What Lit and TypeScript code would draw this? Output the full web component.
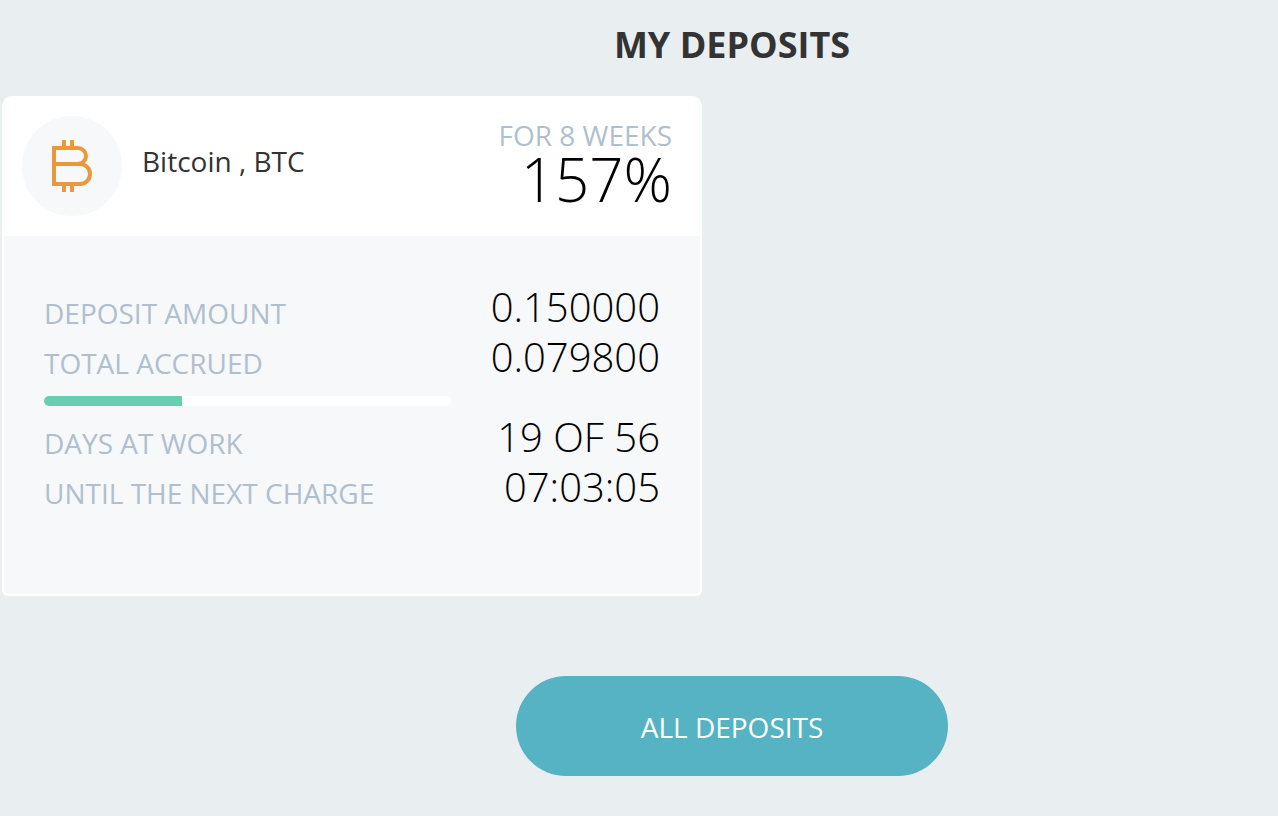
import { LitElement, html, css, svg } from "lit";
import { customElement, property } from "lit/decorators.js";

interface Deposit {
  currency: string;
  code: string;
  term: string;
  rate: string;
  amount: string;
  accrued: string;
  progress: number;
  days: string;
  countdown: string;
}

const bitcoinIcon = svg`
  <g fill="none" stroke="#eb983c" stroke-width="4">
    <path d="M2 8H26A8 8 0 0 1 26 24H2M26 24H28A10 10 0 0 1 28 44H2V6"/>
    <path d="M12 0V8M20 0V8M12 44V52M20 44V52"/>
  </g>`;

@customElement("deposit-card")
export class DepositCard extends LitElement {
  @property({ attribute: false }) deposit!: Deposit;

  static styles = css`
    :host {
      display: block;
    }
    .card {
      background: #fff;
      border: 2px solid #fff;
      border-radius: 10px 10px 6px 6px;
    }
    .head {
      display: flex;
      align-items: flex-start;
      gap: 20px;
      padding: 18px 28px 20px 18px;
    }
    .coin {
      display: flex;
      align-items: center;
      justify-content: center;
      flex: none;
      width: 100px;
      height: 100px;
      border-radius: 50%;
      background: #f6f8fa;
    }
    .name {
      flex: 1;
      margin: 0;
      font-size: 28px;
      font-weight: 400;
      line-height: 90px;
      color: #333;
    }
    .offer {
      text-align: right;
    }
    .term {
      font-size: 28px;
      line-height: 38px;
      color: #b0bfce;
    }
    .rate {
      font-size: 60px;
      font-weight: 300;
      line-height: 50px;
      color: #000;
    }
    .body {
      padding: 52px 40px 76px;
      background: #f6f8fa;
      border-radius: 0 0 4px 4px;
    }
    .list {
      margin: 0;
    }
    .row {
      display: flex;
      justify-content: space-between;
      align-items: flex-start;
    }
    .label {
      font-size: 28px;
      line-height: 50px;
      color: #b0bfce;
    }
    .value {
      margin: 0;
      font-size: 40px;
      font-weight: 300;
      line-height: 38px;
      color: #000;
    }
    .track {
      width: 66%;
      height: 10px;
      margin: 8px 0 12px;
      overflow: hidden;
      border-radius: 5px;
      background: #fff;
    }
    .fill {
      height: 100%;
      background: #67cfb1;
    }
  `;

  render() {
    const d = this.deposit;
    return html`
      <article class="card">
        <header class="head">
          <div class="coin">
            <svg width="40" height="52" viewBox="0 0 40 52" aria-hidden="true">${bitcoinIcon}</svg>
          </div>
          <h2 class="name">${d.currency} , ${d.code}</h2>
          <div class="offer">
            <div class="term">${d.term}</div>
            <div class="rate">${d.rate}</div>
          </div>
        </header>
        <div class="body">
          <dl class="list">
            <div class="row"><dt class="label">DEPOSIT AMOUNT</dt><dd class="value">${d.amount}</dd></div>
            <div class="row"><dt class="label">TOTAL ACCRUED</dt><dd class="value">${d.accrued}</dd></div>
          </dl>
          <div class="track" role="progressbar" aria-label="Days at work" aria-valuenow=${d.progress}>
            <div class="fill" style="width: ${d.progress}%"></div>
          </div>
          <dl class="list">
            <div class="row"><dt class="label">DAYS AT WORK</dt><dd class="value">${d.days}</dd></div>
            <div class="row"><dt class="label">UNTIL THE NEXT CHARGE</dt><dd class="value">${d.countdown}</dd></div>
          </dl>
        </div>
      </article>
    `;
  }
}

@customElement("app-root")
export class AppRoot extends LitElement {
  static styles = css`
    :host {
      display: block;
      box-sizing: border-box;
      min-height: 100vh;
      background: #e9eff1;
      font-family: "Open Sans", "Noto Sans", sans-serif;
    }
    .title {
      margin: 0;
      padding: 20px 0 26px 186px;
      font-size: 36px;
      font-weight: 700;
      line-height: 50px;
      text-align: center;
      color: #333;
    }
    .cards {
      display: grid;
      grid-template-columns: minmax(0, 700px);
      padding-left: 2px;
    }
    .actions {
      display: flex;
      justify-content: center;
      padding: 80px 0 40px 186px;
    }
    .all {
      min-width: 432px;
      padding: 26px 48px 24px;
      border: 0;
      border-radius: 50px;
      background: #55b3c3;
      color: #fff;
      font-family: inherit;
      font-size: 28px;
      line-height: 50px;
      cursor: pointer;
    }
  `;

  private deposits: Deposit[] = [
    {
      currency: "Bitcoin",
      code: "BTC",
      term: "FOR 8 WEEKS",
      rate: "157%",
      amount: "0.150000",
      accrued: "0.079800",
      progress: 34,
      days: "19 OF 56",
      countdown: "07:03:05",
    },
  ];

  render() {
    return html`
      <main>
        <h1 class="title">MY DEPOSITS</h1>
        <section class="cards">
          ${this.deposits.map((d) => html`<deposit-card .deposit=${d}></deposit-card>`)}
        </section>
        <div class="actions">
          <button class="all" type="button">ALL DEPOSITS</button>
        </div>
      </main>
    `;
  }
}
